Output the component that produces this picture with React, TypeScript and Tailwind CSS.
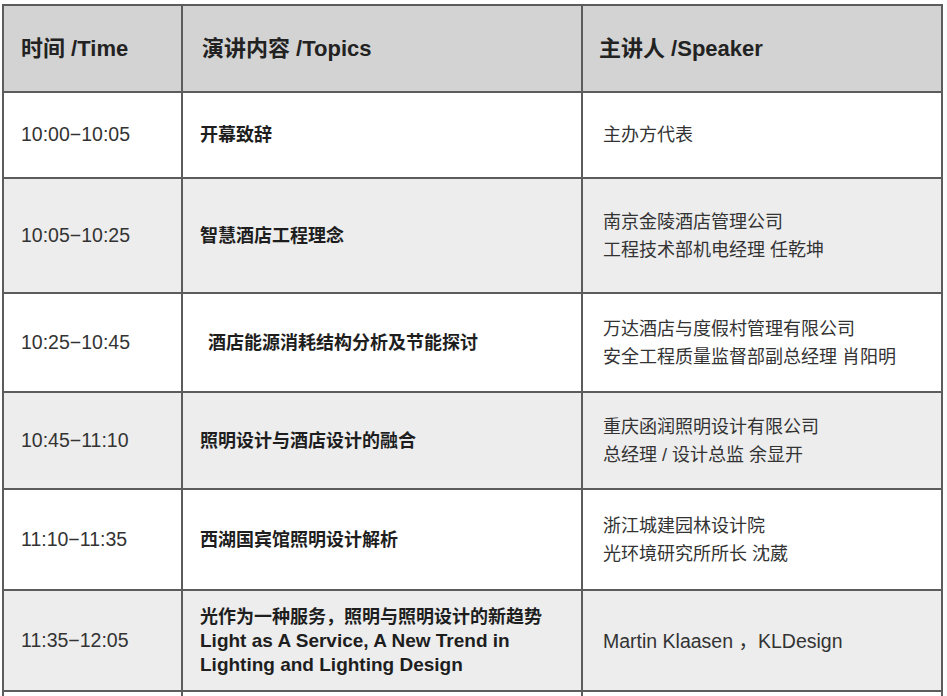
const font = { fontFamily: '"Liberation Sans", "Noto Sans CJK SC", sans-serif' };

type Row = {
  time: string;
  topic: string[];
  speaker: string[];
  h: string;
  bg: string;
  indent?: boolean;
};

const rows: Row[] = [
  { time: '10:00−10:05', topic: ['开幕致辞'], speaker: ['主办方代表'], h: 'h-[86px]', bg: 'bg-white' },
  {
    time: '10:05−10:25',
    topic: ['智慧酒店工程理念'],
    speaker: ['南京金陵酒店管理公司', '工程技术部机电经理 任乾坤'],
    h: 'h-[115px]',
    bg: 'bg-[#ededed]',
  },
  {
    time: '10:25−10:45',
    topic: ['酒店能源消耗结构分析及节能探讨'],
    speaker: ['万达酒店与度假村管理有限公司', '安全工程质量监督部副总经理 肖阳明'],
    h: 'h-[99px]',
    bg: 'bg-white',
    indent: true,
  },
  {
    time: '10:45−11:10',
    topic: ['照明设计与酒店设计的融合'],
    speaker: ['重庆函润照明设计有限公司', '总经理 / 设计总监 余显开'],
    h: 'h-[97px]',
    bg: 'bg-[#ededed]',
  },
  {
    time: '11:10−11:35',
    topic: ['西湖国宾馆照明设计解析'],
    speaker: ['浙江城建园林设计院', '光环境研究所所长 沈葳'],
    h: 'h-[101px]',
    bg: 'bg-white',
  },
  {
    time: '11:35−12:05',
    topic: ['光作为一种服务，照明与照明设计的新趋势', 'Light as A Service, A New Trend in', 'Lighting and Lighting Design'],
    speaker: ['Martin Klaasen ，KLDesign'],
    h: 'h-[101px]',
    bg: 'bg-[#ededed]',
  },
];

function Cell({ children, last, className = '' }: { children?: React.ReactNode; last?: boolean; className?: string }) {
  return (
    <div className={`flex flex-col justify-center ${last ? '' : 'border-r-2 border-[#5c5c5c]'} ${className}`}>
      {children}
    </div>
  );
}

export default function App() {
  return (
    <div className="min-h-[696px] w-[947px] overflow-hidden bg-white pt-[4px] pl-[2px]" style={font}>
      <div className="w-[941px] border-2 border-b-0 border-[#5c5c5c]">
        <div className="grid h-[87px] grid-cols-[179px_400px_1fr] border-b-2 border-[#5c5c5c] bg-[#d3d3d3] text-[22px] font-bold text-[#222]">
          <Cell className="pl-[17px]">时间 /Time</Cell>
          <Cell className="pl-[19px]">演讲内容 /Topics</Cell>
          <Cell last className="pl-[16px]">主讲人 /Speaker</Cell>
        </div>
        {rows.map((r) => (
          <div key={r.time} className={`grid ${r.h} ${r.bg} grid-cols-[179px_400px_1fr] border-b-2 border-[#5c5c5c]`}>
            <Cell className="pl-[17px] text-[19.5px] text-[#333]">{r.time}</Cell>
            <Cell className={`${r.indent ? 'pl-[25px]' : 'pl-[17px]'} text-[18px] leading-[24px] font-bold text-[#1e1e1e]`}>
              {r.topic.map((t, i) => (
                <div key={t} className={i > 0 ? 'text-[19px]' : ''}>
                  {t}
                </div>
              ))}
            </Cell>
            <Cell
              last
              className={`pl-[20px] ${r.speaker[0].startsWith('M') ? 'text-[19.5px]' : 'text-[18px]'} leading-[28px] text-[#333]`}
            >
              {r.speaker.map((s) => (
                <div key={s}>{s}</div>
              ))}
            </Cell>
          </div>
        ))}
        <div className="grid h-[40px] grid-cols-[179px_400px_1fr] bg-white">
          <Cell />
          <Cell />
          <Cell last />
        </div>
      </div>
    </div>
  );
}
